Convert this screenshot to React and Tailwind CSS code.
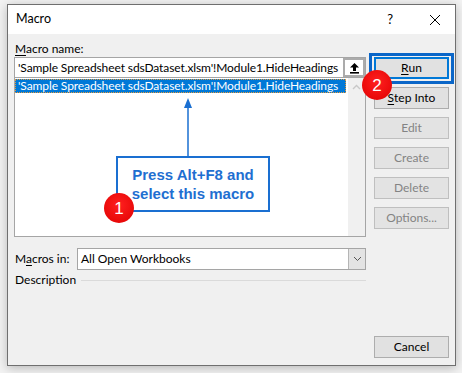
export default function App() {
  const btn =
    "w-[75px] h-[22px] flex items-center justify-center border text-[12px] leading-none";
  return (
    <div className="relative w-[462px] h-[373px] overflow-hidden bg-[#f3f3f3] pt-[4px] pl-[7px] font-['Lato',sans-serif] text-[12px] text-black">
      <div className="w-[449px] h-[362px] border border-[#6f6f6f] bg-[#f0f0f0] shadow-[0_2px_10px_rgba(0,0,0,0.25)] flex flex-col">
        {/* title bar */}
        <div className="h-[29px] bg-white flex items-center pl-[8px] pr-[12px]">
          <span className="text-[12.5px] leading-none flex-1">Macro</span>
          <span className="text-[13px] leading-none mr-[36px]">?</span>
          <svg width="12" height="12" viewBox="0 0 12 12" className="mr-[2px]">
            <path d="M1 1 L11 11 M11 1 L1 11" stroke="#000" strokeWidth="1" />
          </svg>
        </div>
        {/* body */}
        <div className="flex-1 flex">
          {/* left column */}
          <div className="w-[358px] pl-[6px] flex flex-col">
            <div className="mt-[7px] h-[16px] leading-[16px] pl-[1px]">
              <span className="underline underline-offset-2">M</span>acro name:
            </div>
            <div className="h-[21px] flex border border-[#a5a5a5] bg-white">
              <div className="flex-1 pl-[3px] leading-[19px] whitespace-nowrap tracking-[-0.1px]">
                'Sample Spreadsheet sdsDataset.xlsm'!Module1.HideHeadings
              </div>
              <div className="w-[22px] h-full border-2 border-[#ababab] bg-white flex items-center justify-center">
                <svg width="11" height="12" viewBox="0 0 11 12">
                  <path d="M5.5 1 L10 5.5 L7 5.5 L7 9 L4 9 L4 5.5 L1 5.5 Z" fill="#000" />
                  <rect x="1" y="10" width="9" height="1.6" fill="#000" />
                </svg>
              </div>
            </div>
            <div className="h-[159px] border border-t-0 border-[#a5a5a5] bg-white flex">
              <div className="flex-1 pt-[1px]">
                <div className="h-[14px] w-[331px] bg-[#0078d7] text-white leading-[13px] pl-[3px] whitespace-nowrap tracking-[-0.1px] outline outline-1 outline-dotted outline-[#e59a3a] -outline-offset-1">
                  'Sample Spreadsheet sdsDataset.xlsm'!Module1.HideHeadings
                </div>
              </div>
              <div className="w-[17px] bg-[#f0f0f0] flex justify-center pt-[6px]">
                <svg width="9" height="6" viewBox="0 0 9 6">
                  <path d="M1 5 L4.5 1.5 L8 5" fill="none" stroke="#c8c8c8" strokeWidth="1.4" />
                </svg>
              </div>
            </div>
            <div className="mt-[11px] h-[22px] flex items-center">
              <div className="w-[63px] pl-[1px]">
                M<span className="underline underline-offset-2">a</span>cros in:
              </div>
              <div className="flex-1 h-full flex border border-[#a5a5a5] bg-white">
                <div className="flex-1 pl-[3px] leading-[20px]">All Open Workbooks</div>
                <div className="w-[17px] h-full bg-[#e3e3e3] border-l border-[#b5b5b5] flex items-center justify-center">
                  <svg width="9" height="6" viewBox="0 0 9 6">
                    <path d="M1 1 L4.5 4.5 L8 1" fill="none" stroke="#555" strokeWidth="1" />
                  </svg>
                </div>
              </div>
            </div>
            <div className="mt-[2px] h-[16px] flex items-center pl-[1px]">
              <span className="leading-[16px]">Description</span>
              <div className="flex-1 ml-[5px] border-t border-[#dadada]" />
            </div>
          </div>
          {/* right column */}
          <div className="pl-[8px] pt-[23px] pb-[7px] flex flex-col gap-[8px]">
            <div className={`${btn} border-2 border-[#0078d7] bg-[#e1e1e1]`}>
              <span className="underline underline-offset-2">R</span>un
            </div>
            <div className={`${btn} border-[#adadad] bg-[#e1e1e1]`}>
              <span className="underline underline-offset-2">S</span>tep Into
            </div>
            <div className={`${btn} border-[#bfbfbf] bg-[#e3e3e3] text-[#838383]`}>Edit</div>
            <div className={`${btn} border-[#bfbfbf] bg-[#e3e3e3] text-[#838383]`}>Create</div>
            <div className={`${btn} border-[#bfbfbf] bg-[#e3e3e3] text-[#838383]`}>Delete</div>
            <div className={`${btn} border-[#bfbfbf] bg-[#e3e3e3] text-[#838383]`}>Options...</div>
            <div className={`${btn} mt-auto border-[#adadad] bg-[#e1e1e1]`}>Cancel</div>
          </div>
        </div>
      </div>

      {/* annotations */}
      <div className="absolute left-[369px] top-[53px] w-[85px] h-[31px] border-[3px] border-[#0a66c8]" />
      <svg className="absolute left-[183px] top-[97px]" width="10" height="60" viewBox="0 0 10 60">
        <path d="M5 1 L9 11 L1 11 Z" fill="#1a6fd1" />
        <path d="M5 10 L5 59" stroke="#1a6fd1" strokeWidth="1.5" />
      </svg>
      <div className="absolute left-[116px] top-[156px] w-[154px] h-[56px] border-2 border-[#1a6fd1] bg-white flex flex-col items-center justify-center font-['Liberation_Sans',Arial,sans-serif] font-bold text-[15px] leading-[19px] text-[#1f6fd1]">
        <div>Press Alt+F8 and</div>
        <div>select this macro</div>
      </div>
      <div className="absolute left-[104px] top-[193px] w-[30px] h-[30px] rounded-full bg-[radial-gradient(circle_at_50%_40%,#ff2020,#e00000)] flex items-center justify-center font-['Liberation_Sans',Arial,sans-serif] text-white text-[17px] leading-none">
        1
      </div>
      <div className="absolute left-[362px] top-[70px] w-[30px] h-[30px] rounded-full bg-[radial-gradient(circle_at_50%_40%,#ff2020,#e00000)] flex items-center justify-center font-['Liberation_Sans',Arial,sans-serif] text-white text-[17px] leading-none">
        2
      </div>
    </div>
  );
}
